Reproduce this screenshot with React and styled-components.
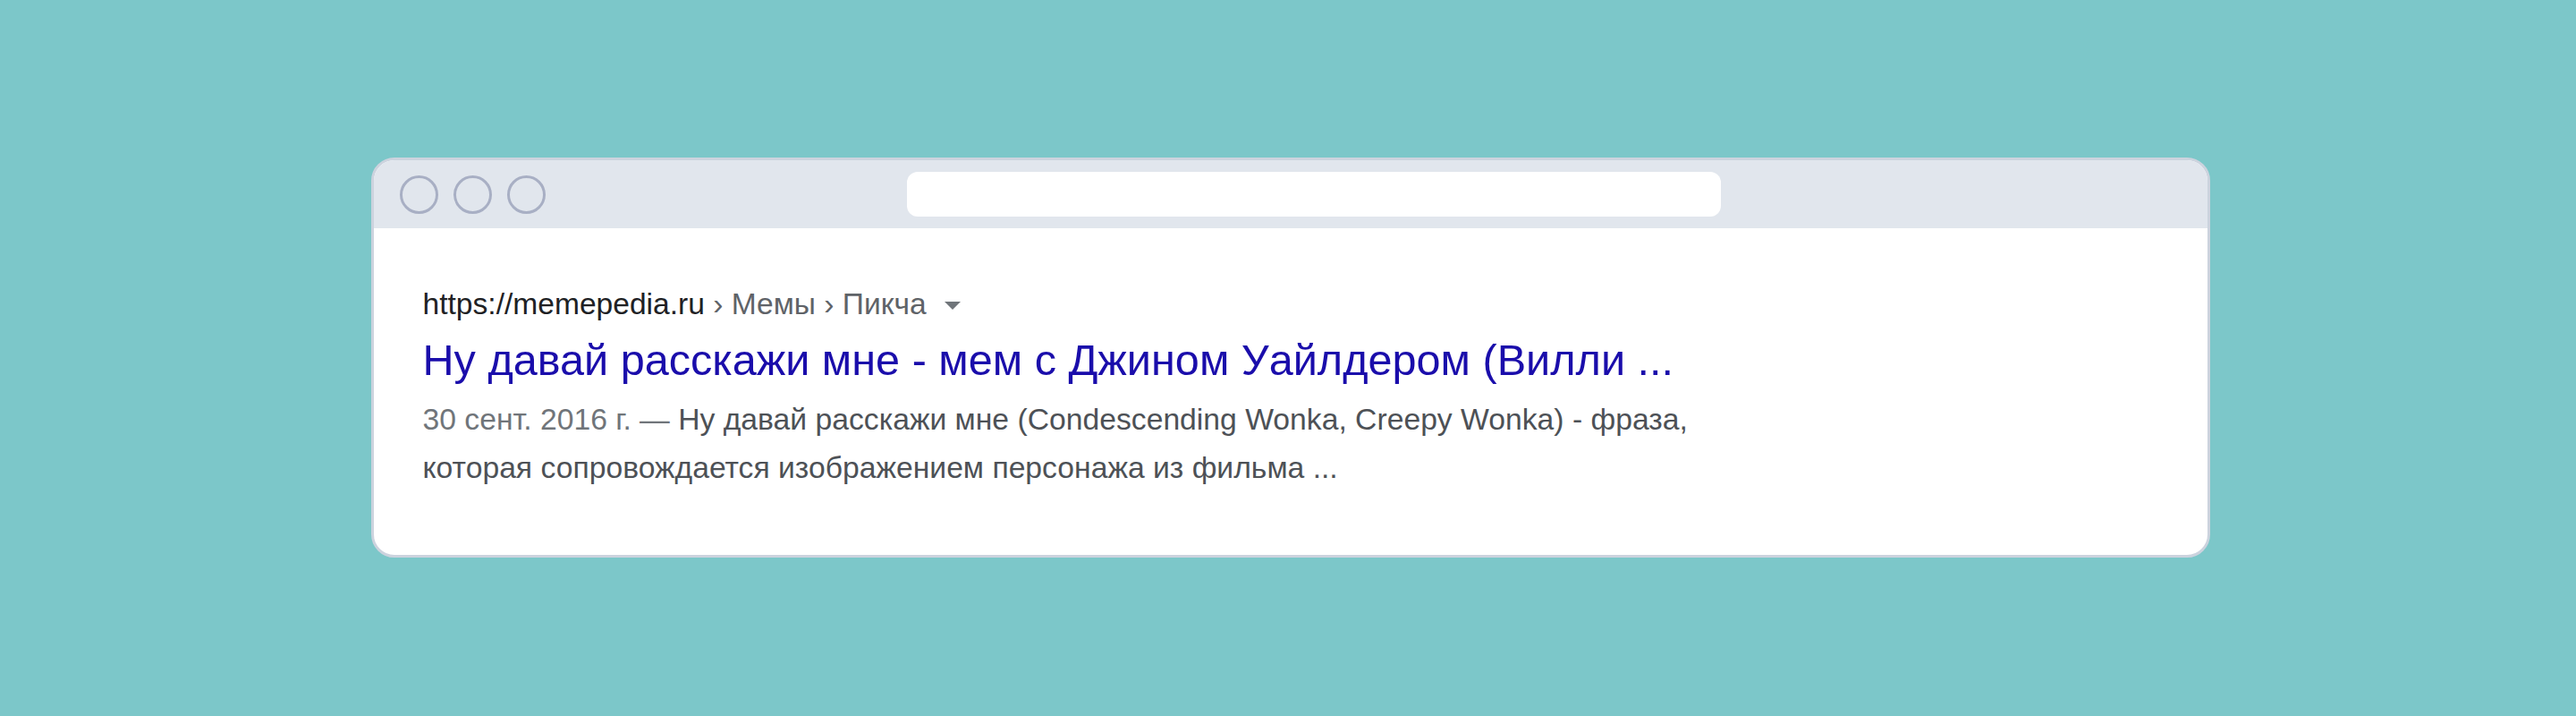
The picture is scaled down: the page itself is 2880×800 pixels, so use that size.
import React from "react";
import styled, { createGlobalStyle } from "styled-components";

const Global = createGlobalStyle`
  html, body { margin: 0; padding: 0; }
  body {
    background: #7cc7c9;
    font-family: "Liberation Sans", Arial, sans-serif;
    width: 2880px;
    height: 800px;
    overflow: hidden;
  }
`;

const Page = styled.div`
  width: 2880px;
  height: 800px;
  display: flex;
  justify-content: center;
  align-items: flex-start;
  padding-top: 176px;
  padding-left: 5px;
  box-sizing: border-box;
`;

const Window = styled.div`
  width: 2056px;
  height: 447px;
  box-sizing: border-box;
  border: 3px solid #ccd3de;
  border-radius: 26px;
  background: #ffffff;
  overflow: hidden;
  display: flex;
  flex-direction: column;
`;

const TitleBar = styled.div`
  height: 76px;
  flex: none;
  background: #e1e6ed;
  display: flex;
  align-items: center;
  padding-left: 29px;
`;

const Dots = styled.div`
  display: flex;
  gap: 17px;
`;

const Dot = styled.span`
  width: 43px;
  height: 43px;
  box-sizing: border-box;
  border: 3.5px solid #a8afc4;
  border-radius: 50%;
`;

const AddressBar = styled.div`
  margin-left: 404px;
  width: 910px;
  height: 50px;
  border-radius: 12px;
  background: #ffffff;
`;

const Content = styled.div`
  padding: 67px 0 0 55px;
  display: flex;
  flex-direction: column;
`;

const Crumbs = styled.div`
  font-size: 33.6px;
  line-height: 36px;
  color: #5f6368;
  display: flex;
  align-items: center;
  white-space: pre;
`;

const Host = styled.span`
  color: #202124;
`;

const Caret = styled.span`
  display: inline-block;
  margin-left: 20px;
  margin-top: 2px;
  width: 0;
  height: 0;
  border-left: 9px solid transparent;
  border-right: 9px solid transparent;
  border-top: 9px solid #70757a;
`;

const Title = styled.a`
  margin-top: 20px;
  font-size: 48.6px;
  line-height: 48px;
  color: #1a0dab;
  text-decoration: none;
  white-space: nowrap;
`;

const Snippet = styled.div`
  margin-top: 15px;
  font-size: 33.7px;
  line-height: 54px;
  color: #4d5156;
  white-space: nowrap;
`;

const DateText = styled.span`
  color: #70757a;
`;

export default function App() {
  return (
    <>
      <Global />
      <Page>
        <Window>
          <TitleBar>
            <Dots>
              <Dot />
              <Dot />
              <Dot />
            </Dots>
            <AddressBar />
          </TitleBar>
          <Content>
            <Crumbs>
              <Host>https://memepedia.ru</Host>{" › Мемы › Пикча"}
              <Caret />
            </Crumbs>
            <Title href="#">
              Ну давай расскажи мне - мем с Джином Уайлдером (Вилли ...
            </Title>
            <Snippet>
              <DateText>30 сент. 2016 г. — </DateText>Ну давай расскажи мне
              (Condescending Wonka, Creepy Wonka) - фраза,
              <br />
              которая сопровождается изображением персонажа из фильма ...
            </Snippet>
          </Content>
        </Window>
      </Page>
    </>
  );
}
